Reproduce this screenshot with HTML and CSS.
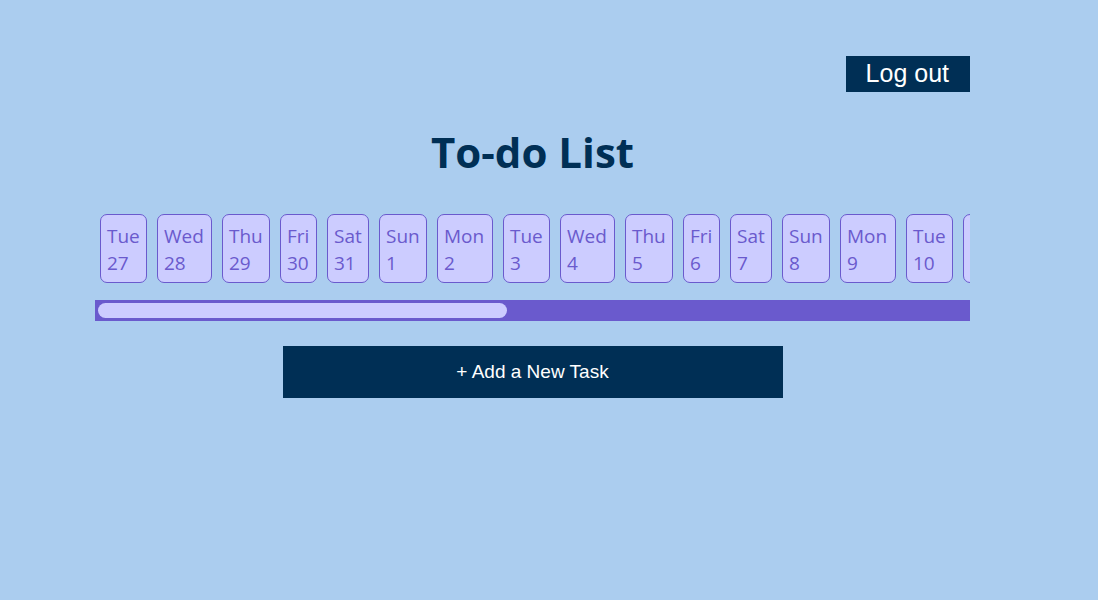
FILE: index.html
```html
<!DOCTYPE html>
<html lang="en">
<head>
<meta charset="utf-8">
<meta name="viewport" content="width=device-width, initial-scale=1">
<title>To-do List</title>
<link rel="stylesheet" href="styles.css">
</head>
<body>
<main class="app">
  <header class="topbar">
    <button type="button" class="logout">Log out</button>
  </header>
  <h1 class="title">To-do List</h1>
  <div class="days" id="days"></div>
  <input type="range" class="scroller" id="scroller" min="0" max="1000" value="0" aria-label="Scroll days">
  <button type="button" class="add-task">+ Add a New Task</button>
</main>
<script src="days.js"></script>
</body>
</html>
```
FILE: styles.css
```css
* {
  box-sizing: border-box;
}

body {
  margin: 0;
  background: #abcdef;
  color: #002f55;
  font-family: "Segoe UI", "Open Sans", "Noto Sans", sans-serif;
}

.app {
  display: flex;
  flex-direction: column;
  padding: 56px 128px 56px 95px;
}

.topbar {
  display: flex;
  justify-content: flex-end;
}

.logout,
.add-task {
  border: 0;
  background: #002f55;
  color: #fff;
  font-family: "Liberation Sans", Arial, sans-serif;
  cursor: pointer;
}

.logout {
  padding: 2px 21px 4px 20px;
  font-size: 25px;
  line-height: 30px;
}

.title {
  margin: 30px 0 27px;
  text-align: center;
  font-size: 42px;
  line-height: 60px;
  font-weight: 700;
}

.days {
  display: flex;
  overflow-x: scroll;
  scrollbar-width: none;
  padding-bottom: 12px;
}

.scroller {
  appearance: none;
  width: 100%;
  height: 21px;
  margin: 0;
  padding: 3px;
  background: #6a5acd;
  cursor: pointer;
}

.scroller::-webkit-slider-thumb {
  appearance: none;
  width: 409px;
  height: 15px;
  border-radius: 8px;
  background: #ccccff;
}

.day {
  flex: none;
  margin: 5px;
  padding: 8px 0 5px 6px;
  border: 1px solid #6a5acd;
  border-radius: 7px;
  background: #ccccff;
  color: #6a5acd;
  font-family: inherit;
  font-size: 19px;
  line-height: 27px;
  text-align: left;
  cursor: pointer;
}

.day-name,
.day-number {
  display: block;
}

.tue { width: 47px; }
.wed { width: 55px; }
.thu { width: 48px; }
.fri { width: 37px; }
.sat { width: 42px; }
.sun { width: 48px; }
.mon { width: 56px; }

.add-task {
  align-self: center;
  width: 100%;
  max-width: 500px;
  margin-top: 25px;
  padding: 15px;
  font-size: 19px;
  line-height: 22px;
}
```
FILE: days.js
```js
const names = ["Sun", "Mon", "Tue", "Wed", "Thu", "Fri", "Sat"];
const list = document.getElementById("days");
const scroller = document.getElementById("scroller");

for (let i = 0; i < 32; i++) {
  const date = new Date(2024, 7, 27 + i);
  const name = names[date.getDay()];
  const day = document.createElement("button");
  day.type = "button";
  day.className = "day " + name.toLowerCase();
  for (const [cls, text] of [["day-name", name], ["day-number", date.getDate()]]) {
    const span = document.createElement("span");
    span.className = cls;
    span.textContent = text;
    day.append(span);
  }
  list.append(day);
}

const range = () => list.scrollWidth - list.clientWidth;

scroller.addEventListener("input", () => {
  list.scrollLeft = (scroller.value / 1000) * range();
});

list.addEventListener("scroll", () => {
  scroller.value = (list.scrollLeft / range()) * 1000;
});
```
